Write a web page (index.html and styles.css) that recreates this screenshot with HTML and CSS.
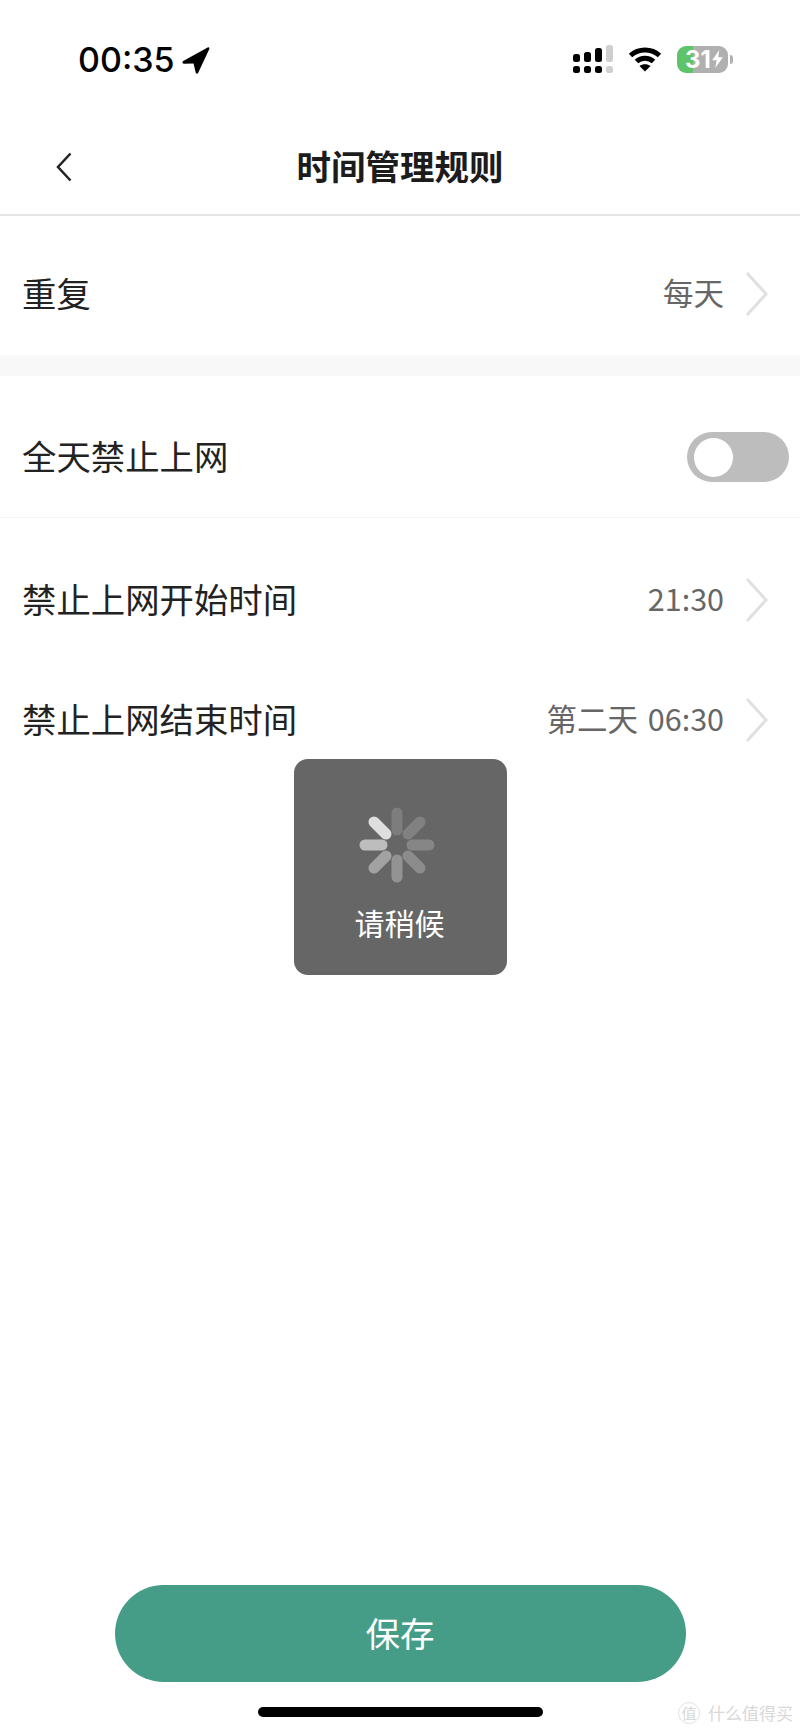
FILE: index.html
```html
<!DOCTYPE html>
<html lang="zh-CN">
<head>
    <meta charset="UTF-8">
    <meta name="viewport" content="width=device-width, initial-scale=1.0">
    <title>时间管理规则</title>
    <link rel="stylesheet" href="styles.css">
</head>
<body>
    <div class="status-bar">
        <div class="status-left">
            <span class="clock">00:35</span>
            <svg class="location" viewBox="0 0 27 27"><path d="M2 14.500 24 2.200c1-.5 1.900.3 1.500 1.300L15.500 25c-.5 1.100-2 1-2.300-.2L11.300 16.600 2.500 16.800C1.100 16.800.8 15.200 2 14.500Z"/></svg>
        </div>
        <div class="status-right">
            <svg class="signal" viewBox="0 0 40 28">
                <rect x="0" y="9" width="7" height="8" rx="2.500"/>
                <rect x="11" y="7" width="7" height="10" rx="2.500"/>
                <rect x="22" y="3" width="7" height="14" rx="2.500"/>
                <rect class="off" x="33" y="0" width="7" height="17" rx="2.500"/>
                <rect x="0" y="21" width="7" height="7" rx="2.500"/>
                <rect x="11" y="21" width="7" height="7" rx="2.500"/>
                <rect x="22" y="21" width="7" height="7" rx="2.500"/>
                <rect class="off" x="33" y="21" width="7" height="7" rx="2.500"/>
            </svg>
            <svg class="wifi" viewBox="0 0 34 26">
                <path d="M2.500 9.500C10.500 2 23.500 2 31.500 9.500" />
                <path d="M8.500 15.500C13 11.200 21 11.200 25.500 15.500" />
                <path class="wifi-tip" d="M17 25.500 11.500 20C14.500 17.500 19.500 17.500 22.500 20Z"/>
            </svg>
            <div class="battery">
                <div class="battery-body">
                    <span class="battery-level">31</span>
                    <svg class="bolt" viewBox="0 0 12 20"><path d="M8 0 0 11.500h5L3.500 20 12 8H6.800Z"/></svg>
                </div>
                <div class="battery-nub"></div>
            </div>
        </div>
    </div>

    <header class="nav-bar">
        <svg class="back" viewBox="0 0 16 30"><path d="M14.500 1.500 2 15l12.500 13.500"/></svg>
        <h1>时间管理规则</h1>
    </header>

    <section class="group group-repeat">
        <div class="row">
            <span class="row-label">重复</span>
            <span class="row-value">每天</span>
            <svg class="chevron" viewBox="0 0 24 46"><path d="M2 2l19 21L2 44"/></svg>
        </div>
    </section>

    <section class="group group-allday">
        <div class="row">
            <span class="row-label">全天禁止上网</span>
            <div class="toggle"><div class="toggle-knob"></div></div>
        </div>
    </section>

    <section class="group group-times">
        <div class="row">
            <span class="row-label">禁止上网开始时间</span>
            <span class="row-value">21:30</span>
            <svg class="chevron" viewBox="0 0 24 46"><path d="M2 2l19 21L2 44"/></svg>
        </div>
        <div class="row">
            <span class="row-label">禁止上网结束时间</span>
            <span class="row-value">第二天 06:30</span>
            <svg class="chevron" viewBox="0 0 24 46"><path d="M2 2l19 21L2 44"/></svg>
        </div>
    </section>

    <div class="bottom">
        <button class="save-btn">保存</button>
        <div class="home-bar"></div>
    </div>

    <!-- loading toast, sits over the form -->
    <div class="toast">
        <svg class="spinner" viewBox="0 0 80 80">
            <line x1="40" y1="8" x2="40" y2="25" stroke="#7d7d7d"/>
            <line x1="63" y1="17" x2="51" y2="29" stroke="#818181"/>
            <line x1="72" y1="40" x2="55" y2="40" stroke="#868686"/>
            <line x1="63" y1="63" x2="51" y2="51" stroke="#8c8c8c"/>
            <line x1="40" y1="72" x2="40" y2="55" stroke="#939393"/>
            <line x1="17" y1="63" x2="29" y2="51" stroke="#a2a2a2"/>
            <line x1="8" y1="40" x2="25" y2="40" stroke="#bdbdbd"/>
            <line x1="17" y1="17" x2="29" y2="29" stroke="#dedede"/>
        </svg>
        <span class="toast-text">请稍候</span>
    </div>

    <div class="watermark">
        <span class="watermark-seal">值</span>
        <span class="watermark-name">什么值得买</span>
    </div>
</body>
</html>
```

FILE: styles.css
```css
* {
    box-sizing: border-box;
}

body {
    font-family: "Noto Sans CJK SC", "Noto Sans", sans-serif;
    margin: 0;
    padding: 0;
    display: flex;
    flex-direction: column;
    position: relative;
    height: 1734px;
    overflow: hidden;
    background-color: #fff;
    color: #222;
}

/* status bar */
.status-bar {
    height: 120px;
    display: flex;
    justify-content: space-between;
    align-items: flex-start;
    padding: 40px 67px 0 78px;
}

.status-left {
    display: flex;
    align-items: center;
    gap: 6px;
}

.clock {
    font-family: Inter, "Liberation Sans", sans-serif;
    font-size: 34px;
    font-weight: 500;
    line-height: 40px;
    color: #000;
}

.location {
    width: 30px;
    height: 30px;
    fill: #000;
}

.status-right {
    display: flex;
    align-items: center;
    gap: 15px;
    padding-top: 5px;
}

.signal {
    width: 40px;
    height: 28px;
    fill: #000;
}

.signal .off {
    fill: #cfcfcf;
}

.wifi {
    width: 34px;
    height: 26px;
    fill: none;
    stroke: #000;
    stroke-width: 5px;
}

.wifi-tip {
    fill: #000;
    stroke: none;
}

.battery {
    display: flex;
    align-items: center;
    gap: 2px;
}

.battery-body {
    width: 51px;
    height: 27px;
    border-radius: 9px;
    background: linear-gradient(90deg, #5fc36a 31%, #b0b0b0 31%);
    display: flex;
    align-items: center;
    padding-left: 8px;
    gap: 1px;
}

.battery-level {
    font-family: Inter, "Liberation Sans", sans-serif;
    font-size: 24px;
    font-weight: 700;
    line-height: 27px;
    color: #fff;
}

.bolt {
    width: 11px;
    height: 18px;
    fill: #fff;
}

.battery-nub {
    width: 3px;
    height: 9px;
    border-radius: 0 3px 3px 0;
    background-color: #b0b0b0;
}

/* nav bar */
.nav-bar {
    position: relative;
    height: 96px;
    display: flex;
    align-items: center;
    justify-content: center;
    border-bottom: 2px solid #e6e6e6;
}

.nav-bar h1 {
    margin: 0 0 4px;
    font-size: 34.500px;
    font-weight: 700;
    color: #1c1c1c;
}

.back {
    position: absolute;
    left: 56px;
    top: 32px;
    width: 16px;
    height: 30px;
    fill: none;
    stroke: #222;
    stroke-width: 2.500px;
}

/* form rows */
.group-repeat {
    padding: 18px 0 1px;
    border-bottom: 21px solid #f8f8f8;
}

.group-allday {
    padding-top: 21px;
    border-bottom: 1px solid #f4f4f4;
}

.group-times {
    padding-top: 22px;
}

.row {
    height: 120px;
    display: flex;
    align-items: center;
    padding: 0 11px 0 22px;
}

.row-label {
    font-size: 34.400px;
    color: #222;
    flex: 1;
    margin-bottom: 4px;
}

.row-value {
    font-size: 30.500px;
    color: #666;
    word-spacing: 3px;
    margin-right: 21px;
    margin-bottom: 4px;
}

.chevron {
    width: 24px;
    height: 46px;
    margin-right: 20px;
    fill: none;
    stroke: #e0e0e0;
    stroke-width: 3px;
}

.toggle {
    width: 102px;
    height: 50px;
    border-radius: 25px;
    background-color: #bdbdbd;
    display: flex;
    align-items: center;
    padding-left: 7px;
}

.toggle-knob {
    width: 39px;
    height: 39px;
    border-radius: 50%;
    background-color: #fff;
}

/* bottom action */
.bottom {
    margin-top: auto;
    display: flex;
    flex-direction: column;
    align-items: center;
    padding-bottom: 17px;
}

.save-btn {
    width: 571px;
    height: 97px;
    border: none;
    border-radius: 49px;
    background-color: #459d87;
    color: #fff;
    font-family: inherit;
    font-size: 34.500px;
    padding-bottom: 4px;
}

.home-bar {
    width: 285px;
    height: 10px;
    margin-top: 25px;
    border-radius: 5px;
    background-color: #000;
}

/* overlays */
.toast {
    position: absolute;
    left: 294px;
    top: 759px;
    width: 213px;
    height: 216px;
    border-radius: 14px;
    background-color: #666;
    display: flex;
    flex-direction: column;
    align-items: center;
    padding-top: 46px;
}

.spinner {
    width: 80px;
    height: 80px;
    margin-right: 7px;
    stroke-width: 11px;
    stroke-linecap: round;
}

.toast-text {
    margin: 16px 2px 0 0;
    font-size: 30px;
    line-height: 42px;
    color: #fff;
}

.watermark {
    position: absolute;
    left: 678px;
    top: 1702px;
    display: flex;
    align-items: center;
    gap: 8px;
    color: #d8d8d8;
}

.watermark-seal {
    width: 22px;
    height: 22px;
    border: 1px solid #e2e2e2;
    border-radius: 50%;
    font-size: 15px;
    line-height: 20px;
    text-align: center;
}

.watermark-name {
    font-size: 17px;
    line-height: 22px;
}
```
